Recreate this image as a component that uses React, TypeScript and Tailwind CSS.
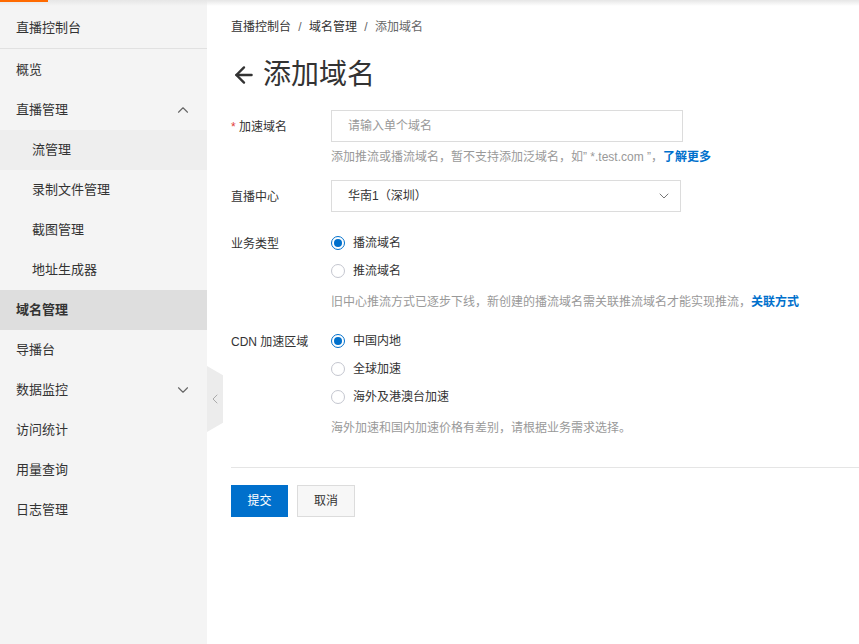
import { ArrowLeft, ChevronDown, ChevronLeft, ChevronUp } from 'lucide-react'

const font = { fontFamily: '"Liberation Sans", "Noto Sans CJK SC", sans-serif' }

function NavItem({ label, sub, active, hover, icon }: { label: string; sub?: boolean; active?: boolean; hover?: boolean; icon?: 'up' | 'down' }) {
  return (
    <div
      className={`flex h-10 items-center justify-between pr-[15px] text-[13px] text-[#333] ${sub ? 'pl-8' : 'pl-4'} ${active ? 'bg-[#dedede] font-bold' : hover ? 'bg-[#eeeeee]' : ''}`}
    >
      <span>{label}</span>
      {icon === 'up' && <ChevronUp className="h-[18px] w-[18px] text-[#666]" strokeWidth={1.5} />}
      {icon === 'down' && <ChevronDown className="h-[18px] w-[18px] text-[#666]" strokeWidth={1.5} />}
    </div>
  )
}

function Radio({ label, checked }: { label: string; checked?: boolean }) {
  return (
    <label className="flex h-7 items-center gap-2 text-[12px] text-[#333]">
      <span
        className={`flex h-[14px] w-[14px] items-center justify-center rounded-full border ${checked ? 'border-[#0070cc]' : 'border-[#c4c6cf]'} bg-white`}
      >
        {checked && <span className="h-2 w-2 rounded-full bg-[#0070cc]" />}
      </span>
      {label}
    </label>
  )
}

export default function App() {
  return (
    <div className="relative flex h-[644px] w-[859px] overflow-hidden bg-white" style={font}>
      {/* top shadow */}
      <div className="pointer-events-none absolute left-0 right-0 top-0 z-10 h-[6px] bg-gradient-to-b from-[#e6e6e6] to-transparent" />
      <div className="absolute left-0 top-0 z-20 h-[2px] w-[48px] bg-[#ff6a00]" />

      {/* Sidebar */}
      <aside className="relative w-[207px] shrink-0 bg-[#f4f4f4]">
        <div className="flex h-[49px] items-center border-b border-[#e1e1e1] pl-4 pt-2 text-[13px] text-[#333]">直播控制台</div>
        <div className="pt-[1px]">
          <NavItem label="概览" />
          <NavItem label="直播管理" icon="up" />
          <NavItem label="流管理" sub hover />
          <NavItem label="录制文件管理" sub />
          <NavItem label="截图管理" sub />
          <NavItem label="地址生成器" sub />
          <NavItem label="域名管理" active />
          <NavItem label="导播台" />
          <NavItem label="数据监控" icon="down" />
          <NavItem label="访问统计" />
          <NavItem label="用量查询" />
          <NavItem label="日志管理" />
        </div>
      </aside>

      {/* collapse handle */}
      <div
        className="absolute left-[207px] top-[366px] z-10 flex h-[66px] w-[16px] items-center justify-center bg-[#ececec]"
        style={{ clipPath: 'polygon(0 0, 100% 14%, 100% 86%, 0 100%)' }}
      >
        <ChevronLeft className="h-4 w-4 text-[#aaa]" strokeWidth={1.5} />
      </div>

      {/* Main */}
      <main className="flex-1 pl-6">
        <div className="pt-[18px] text-[12px] text-[#333]">
          直播控制台 <span className="mx-1 text-[#666]">/</span> 域名管理 <span className="mx-1 text-[#666]">/</span>{' '}
          <span className="text-[#666]">添加域名</span>
        </div>
        <h1 className="mt-[22px] flex items-center gap-[6px] text-[28px] leading-[34px] text-[#333]">
          <ArrowLeft className="h-[26px] w-[26px] text-[#333]" strokeWidth={2.2} />
          添加域名
        </h1>

        <div className="mt-[18px]">
          {/* 加速域名 */}
          <div className="flex">
            <div className="w-[100px] pt-[8px] text-[12px] text-[#333]">
              <span className="text-[#e23c39]">*</span> 加速域名
            </div>
            <div>
              <input
                placeholder="请输入单个域名"
                className="h-8 w-[352px] border border-[#dcdcdc] px-4 text-[12px] text-[#333] placeholder-[#999] outline-none"
              />
              <div className="mt-[6px] text-[12px] text-[#999]">
                添加推流或播流域名，暂不支持添加泛域名，如” *.test.com ”，<span className="font-bold text-[#0070cc]">了解更多</span>
              </div>
            </div>
          </div>

          {/* 直播中心 */}
          <div className="mt-[14px] flex">
            <div className="w-[100px] pt-[8px] text-[12px] text-[#333]">直播中心</div>
            <div className="flex h-8 w-[350px] items-center justify-between border border-[#dcdcdc] pl-4 pr-2 text-[12px] text-[#333]">
              华南1（深圳）
              <ChevronDown className="h-4 w-4 text-[#777]" strokeWidth={1.5} />
            </div>
          </div>

          {/* 业务类型 */}
          <div className="mt-[17px] flex">
            <div className="w-[100px] pt-[6px] text-[12px] text-[#333]">业务类型</div>
            <div>
              <Radio label="播流域名" checked />
              <Radio label="推流域名" />
              <div className="mt-[8px] text-[12px] text-[#999]">
                旧中心推流方式已逐步下线，新创建的播流域名需关联推流域名才能实现推流，<span className="font-bold text-[#0070cc]">关联方式</span>
              </div>
            </div>
          </div>

          {/* CDN */}
          <div className="mt-[16px] flex">
            <div className="w-[100px] pt-[6px] text-[12px] text-[#333]">CDN 加速区域</div>
            <div>
              <Radio label="中国内地" checked />
              <Radio label="全球加速" />
              <Radio label="海外及港澳台加速" />
              <div className="mt-[8px] text-[12px] text-[#999]">海外加速和国内加速价格有差别，请根据业务需求选择。</div>
            </div>
          </div>
        </div>

        <div className="mt-[30px] border-t border-[#e5e5e5]" />

        <div className="mt-[17px] flex gap-[9px]">
          <button className="h-8 w-[57px] bg-[#0070cc] text-[12px] text-white">提交</button>
          <button className="h-8 w-[58px] border border-[#dcdcdc] bg-[#f7f7f7] text-[12px] text-[#333]">取消</button>
        </div>
      </main>
    </div>
  )
}
